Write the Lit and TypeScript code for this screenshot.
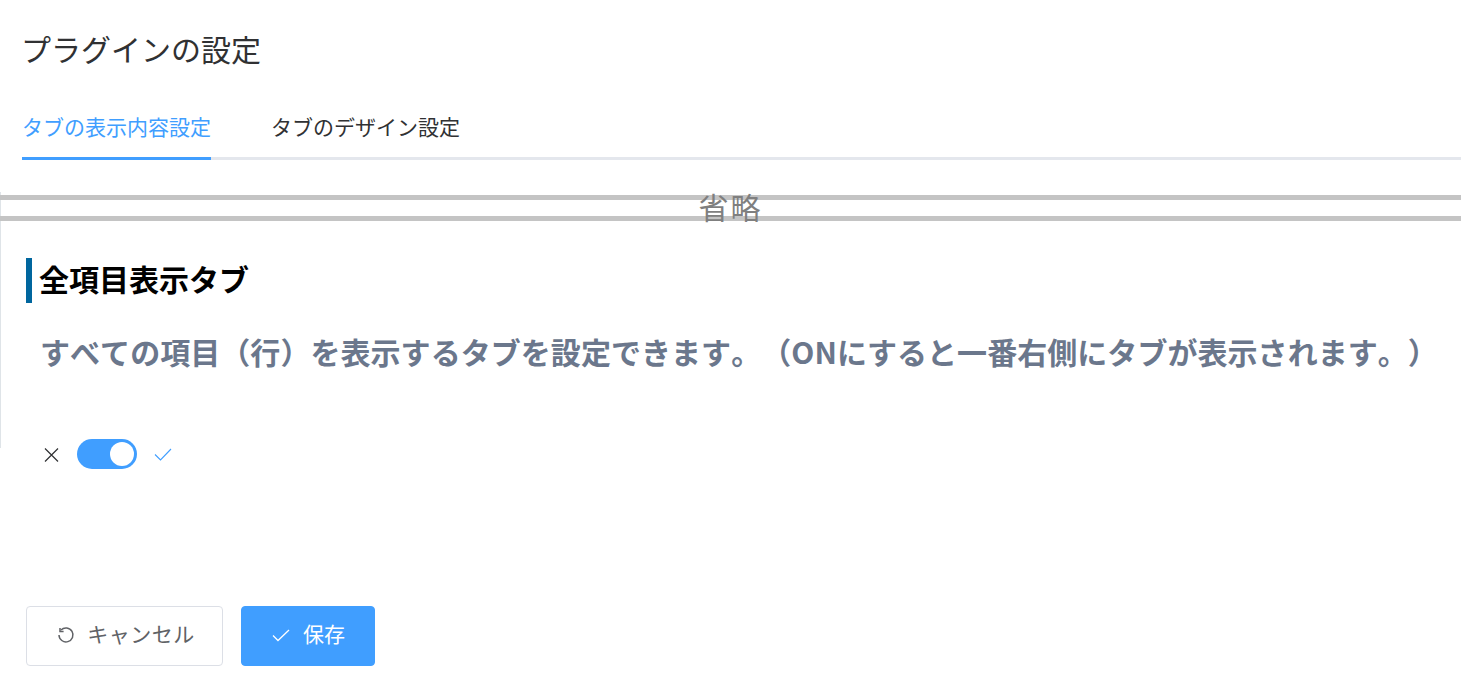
import { LitElement, html, css } from "lit";
import { customElement } from "lit/decorators.js";

@customElement("app-root")
export class AppRoot extends LitElement {
  static styles = css`
    :host {
      display: block;
      width: 100%;
      height: 698px;
      overflow: hidden;
      background: #fff;
      font-family: "Noto Sans CJK JP", "Noto Sans", sans-serif;
      box-sizing: border-box;
      text-spacing-trim: space-all;
      font-kerning: none;
    }
    .head { padding: 28px 0 0 21px; }
    h1 { margin: 0; font-size: 30px; line-height: 40px; font-weight: 400; color: #303133; }
    .tabs { display: flex; gap: 60px; margin: 34px 0 0 22px; height: 58px; border-bottom: 3px solid #e4e7ed; box-sizing: border-box; }
    .tab { font-size: 21px; line-height: 48px; color: #303133; height: 58px; box-sizing: border-box; white-space: nowrap; }
    .tab.on { color: #409eff; border-bottom: 3px solid #409eff; }
    .frame { margin-top: 32px; border-left: 1px solid #dfe4e8; height: 256px; box-sizing: border-box; padding-top: 3px; }
    .band { border-top: 5px solid #c4c4c4; border-bottom: 5px solid #c4c4c4; margin-left: -1px; display: flex; justify-content: center; align-items: flex-start; height: 16px; }
    .band span { font-size: 30px; line-height: 12px; letter-spacing: 2px; color: #7f7f7f; }
    .title { margin: 37px 0 0 25px; border-left: 6px solid #00669e; height: 45px; padding-left: 7px; font-size: 30px; line-height: 40px; font-weight: 700; color: #000; white-space: nowrap; }
    .desc { margin: 26px 0 0 39px; font-size: 30px; line-height: 44px; font-weight: 700; letter-spacing: 0.05px; color: #6b778c; white-space: nowrap; }
    .switch { display: flex; align-items: center; margin: -9px 0 0 44px; height: 30px; }
    .x { width: 16px; height: 16px; margin-right: 17px; display: block; }
    .track { width: 60px; height: 30px; border-radius: 15px; background: #409eff; display: flex; justify-content: flex-end; align-items: center; padding: 0 3px; box-sizing: border-box; }
    .knob { width: 24px; height: 24px; border-radius: 50%; background: #fff; }
    .ck { width: 18px; height: 18px; margin-left: 17px; display: block; }
    .actions { display: flex; gap: 18px; margin: 137px 0 0 26px; }
    button { height: 60px; border-radius: 4px; font-family: inherit; font-size: 21px; display: flex; align-items: center; justify-content: center; gap: 12px; box-sizing: border-box; padding: 0; }
    .label { display: block; line-height: 26px; margin-top: -6px; }
    .cancel { width: 197px; background: #fff; border: 1px solid #dcdfe6; color: #606266; padding-left: 3px; }
    .cancel .label { letter-spacing: 0.5px; }
    .save { width: 134px; background: #409eff; border: 1px solid #409eff; color: #fff; gap: 14px; }
    button svg { width: 18px; height: 18px; display: block; overflow: visible; }
  `;

  render() {
    return html`
      <div class="head"><h1>プラグインの設定</h1></div>
      <div class="tabs">
        <div class="tab on">タブの表示内容設定</div>
        <div class="tab">タブのデザイン設定</div>
      </div>
      <div class="frame">
        <div class="band"><span>省略</span></div>
        <div class="title">全項目表示タブ</div>
        <div class="desc">すべての項目（行）を表示するタブを設定できます。（ONにすると一番右側にタブが表示されます。）</div>
      </div>
      <div class="switch">
        <svg class="x" viewBox="0 0 16 16" fill="none" stroke="#303133" stroke-width="1.2"><path d="M1 2.5 14 15.5M14 2.5 1 15.5"/></svg>
        <div class="track"><div class="knob"></div></div>
        <svg class="ck" viewBox="0 0 18 18" fill="none" stroke="#409eff" stroke-width="1.1"><path d="M1 9.5 6.5 15 17 4"/></svg>
      </div>
      <div class="actions">
        <button class="cancel">
          <svg viewBox="0 0 18 18" fill="none" stroke="#606266" stroke-width="1.5"><path d="M4 3A7 7 0 1 1 2 8"/><path d="M3 1V4.4H6.6"/></svg>
          <span class="label">キャンセル</span>
        </button>
        <button class="save">
          <svg viewBox="0 0 18 18" fill="none" stroke="#fff" stroke-width="1.3"><path d="M2 8.5 7 13.5 18 3"/></svg>
          <span class="label">保存</span>
        </button>
      </div>
    `;
  }
}
